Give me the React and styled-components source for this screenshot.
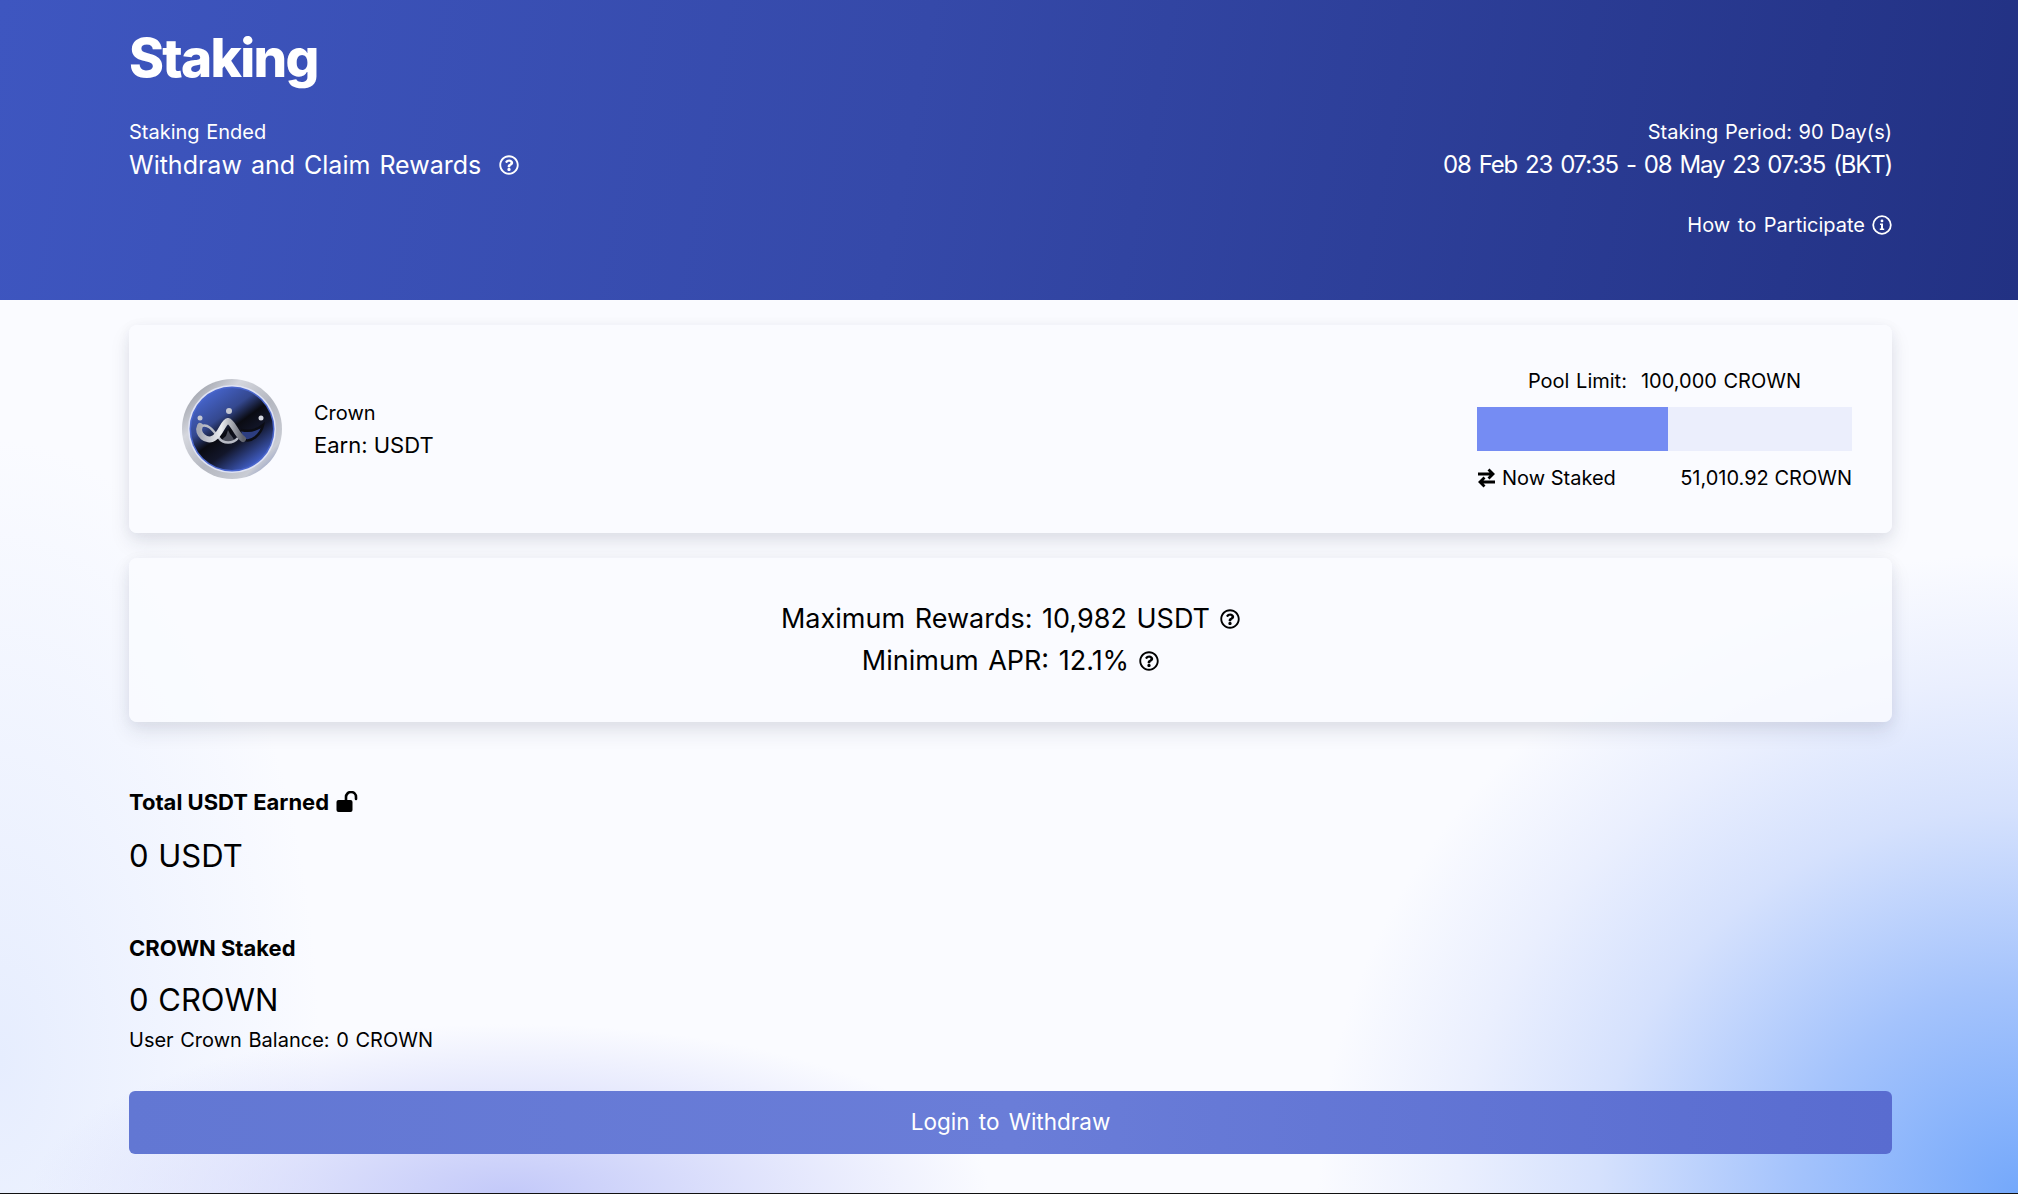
import React from "react";
import styled, { createGlobalStyle } from "styled-components";
import { FaRegQuestionCircle } from "react-icons/fa";

const GlobalStyle = createGlobalStyle`
  html, body {
    margin: 0;
    padding: 0;
    background: #fff;
  }
  body {
    font-family: Inter, "Open Sans", sans-serif;
    color: #000;
  }
`;

const Page = styled.div`
  width: 2018px;
  height: 1194px;
  overflow: hidden;
  box-sizing: border-box;
  border-bottom: 1px solid #111;
  background:
    radial-gradient(ellipse 480px 170px at 510px 1194px, #c3c9f9 0%, rgba(205, 210, 250, 0.6) 50%, rgba(220, 224, 250, 0) 100%),
    radial-gradient(ellipse 700px 640px at 2018px 1194px, #74a8fb 0%, #a4c3fc 32%, #d5e1fd 60%, #eaeffe 80%, rgba(248, 250, 255, 0) 100%),
    radial-gradient(ellipse 320px 620px at 0 1060px, #e6edfe 0%, rgba(240, 244, 254, 0) 100%),
    #fafbff;
`;

const Hero = styled.header`
  height: 300px;
  box-sizing: border-box;
  padding: 25px 126px 0 129px;
  color: #fff;
  background: linear-gradient(100deg, #3e56c0 0%, #3549a9 45%, #223183 100%);
`;

const Title = styled.h1`
  margin: 0 0 27px;
  font-size: 53px;
  line-height: 66px;
  font-weight: 800;
  letter-spacing: -1.7px;
`;

const HeroRow = styled.div`
  display: flex;
  justify-content: space-between;
`;

const HeroCol = styled.div`
  text-align: ${p => (p.$right ? "right" : "left")};
`;

const SmallLine = styled.div`
  font-size: 20px;
  line-height: 28px;
  word-spacing: 1px;
`;

const BigLine = styled.div`
  display: flex;
  align-items: center;
  gap: 18px;
  margin-top: 1px;
  font-size: 25px;
  line-height: 36px;
  word-spacing: 2px;
`;

const DateLine = styled(BigLine)`
  justify-content: flex-end;
  font-size: 24px;
  letter-spacing: -1.2px;
  word-spacing: 2.5px;
`;

const HowTo = styled.div`
  display: flex;
  align-items: center;
  justify-content: flex-end;
  gap: 7px;
  margin-top: 28px;
  font-size: 20px;
  line-height: 28px;
  word-spacing: 2px;
`;

const Content = styled.main`
  padding: 25px 126px 0 129px;
`;

const Card = styled.section`
  box-sizing: border-box;
  height: ${p => p.$h}px;
  margin-bottom: 25px;
  background: rgba(250, 251, 255, 0.78);
  border-radius: 8px;
  box-shadow: 0 10px 20px rgba(30, 40, 70, 0.1), 0 2px 14px rgba(30, 40, 70, 0.05);
`;

const PoolCard = styled(Card)`
  display: flex;
  align-items: center;
  justify-content: space-between;
  padding: 0 40px 0 52px;
`;

const TokenInfo = styled.div`
  display: flex;
  align-items: center;
  gap: 31px;
`;

const TokenText = styled.div`
  margin-top: 1px;
`;

const TokenName = styled.div`
  font-size: 20px;
  line-height: 30px;
`;

const TokenEarn = styled.div`
  font-size: 22px;
  line-height: 34px;
`;

const PoolStats = styled.div`
  width: 375px;
`;

const PoolLimit = styled.div`
  display: flex;
  justify-content: center;
  gap: 14px;
  font-size: 20px;
  line-height: 30px;
  margin-bottom: 11px;
  word-spacing: 1px;
`;

const Track = styled.div`
  height: 44px;
  background: #ebeefc;
`;

const Fill = styled.div`
  height: 100%;
  background: #758cf3;
`;

const StakedRow = styled.div`
  display: flex;
  justify-content: space-between;
  margin-top: 13px;
  font-size: 20px;
  line-height: 28px;
`;

const StakedLabel = styled.div`
  display: flex;
  align-items: center;
  gap: 6px;
`;

const RewardsCard = styled(Card)`
  display: flex;
  flex-direction: column;
  justify-content: center;
  align-items: center;
  margin-bottom: 0;
`;

const RewardLine = styled.div`
  display: flex;
  align-items: center;
  gap: 10px;
  font-size: 27px;
  line-height: 42px;
  word-spacing: 2px;
`;

const Stat = styled.div`
  margin-top: ${p => p.$top}px;
`;

const StatLabel = styled.div`
  display: flex;
  align-items: center;
  gap: 7px;
  font-size: 22px;
  line-height: 30px;
  font-weight: 700;
`;

const StatValue = styled.div`
  margin-top: ${p => p.$gap}px;
  font-size: 31px;
  line-height: 42px;
  word-spacing: 1px;
`;

const Balance = styled.div`
  margin-top: 5px;
  font-size: 20px;
  line-height: 28px;
  word-spacing: 1px;
`;

const LoginButton = styled.button`
  display: block;
  width: 100%;
  height: 63px;
  margin-top: 37px;
  padding: 0 0 2px;
  border: 0;
  border-radius: 6px;
  color: #fff;
  font: inherit;
  font-size: 22.5px;
  word-spacing: 3px;
  background: linear-gradient(90deg, #6277d3 0%, #6a7dd8 50%, #596cd0 100%);
`;

const InfoIcon = () => (
  <svg width="20" height="20" viewBox="0 0 20 20" fill="none">
    <circle cx="10" cy="10" r="8.8" stroke="#fff" strokeWidth="1.8" />
    <circle cx="10" cy="5.9" r="1.4" fill="#fff" />
    <path d="M8 8.6h3v5h1.2v1.4H7.8v-1.4H9V10H8z" fill="#fff" />
  </svg>
);

const ExchangeIcon = () => (
  <svg width="19" height="20" viewBox="0 0 19 20" fill="none">
    <path d="M1 6h15M11.500 1.500l4.500 4.500-4.500 4.500M18 14H3M7.500 9.500L3 14l4.500 4.500" stroke="#000" strokeWidth="2.800" />
  </svg>
);

const UnlockIcon = () => (
  <svg width="23" height="22" viewBox="0 0 23 22">
    <rect x="0.500" y="9" width="16" height="12" rx="2" fill="#000" />
    <path d="M10 9.500V6a5 5 0 0 1 10 0v2" fill="none" stroke="#000" strokeWidth="2.600" strokeLinecap="round" />
  </svg>
);

const CrownLogo = () => (
  <svg width="102" height="102" viewBox="0 0 102 102">
    <defs>
      <linearGradient id="ring" x1="0" y1="0" x2="1" y2="1">
        <stop offset="0" stopColor="#80848f" />
        <stop offset="0.3" stopColor="#d5d7de" />
        <stop offset="0.55" stopColor="#b4b7c0" />
        <stop offset="0.8" stopColor="#c9ccd4" />
        <stop offset="1" stopColor="#5f73b8" />
      </linearGradient>
      <linearGradient id="disc" x1="0.15" y1="0.08" x2="0.78" y2="0.95">
        <stop offset="0" stopColor="#4766cf" />
        <stop offset="0.32" stopColor="#34488f" />
        <stop offset="0.5" stopColor="#0a0b12" />
        <stop offset="0.68" stopColor="#12162a" />
        <stop offset="1" stopColor="#4362cf" />
      </linearGradient>
      <linearGradient id="ribbon" x1="0" y1="0" x2="1" y2="0">
        <stop offset="0" stopColor="#a6a9b4" />
        <stop offset="0.5" stopColor="#eceef2" />
        <stop offset="1" stopColor="#60636e" />
      </linearGradient>
    </defs>
    <circle cx="51" cy="51" r="50" fill="url(#ring)" />
    <circle cx="51" cy="51" r="44" fill="#dfe3f5" />
    <circle cx="51" cy="51" r="42.500" fill="#4a66cc" />
    <circle cx="51" cy="51" r="41" fill="url(#disc)" />
    <path d="M45 58C40 62 38 65 47 65C56 65 54 62 49 56L47 52z" fill="#4c4f5c" />
    <path d="M19 49C26 44 32 52 38 60C42 66 52 66 57 60" fill="none" stroke="#b9bcc6" strokeWidth="2.500" />
    <path d="M62 61C70 66 80 56 82 47C76 52 68 54 60 52" fill="#2c3d80" stroke="#0c0d14" strokeWidth="2.500" />
    <path d="M19 48C15 56 26 65 33 60C40 56 42 44 47 43C52 44 55 56 62 61" fill="none" stroke="url(#ribbon)" strokeWidth="6" strokeLinecap="round" />
    <circle cx="48" cy="33" r="3" fill="#c4c7d2" />
    <circle cx="19" cy="40" r="2.500" fill="#c4c7d2" />
    <circle cx="80" cy="40" r="2.500" fill="#d4d6de" />
  </svg>
);

const App = () => {
  return (
    <Page>
      <GlobalStyle />
      <Hero>
        <Title>Staking</Title>
        <HeroRow>
          <HeroCol>
            <SmallLine>Staking Ended</SmallLine>
            <BigLine>
              Withdraw and Claim Rewards <FaRegQuestionCircle size={20} />
            </BigLine>
          </HeroCol>
          <HeroCol $right>
            <SmallLine>Staking Period: 90 Day(s)</SmallLine>
            <DateLine>08 Feb 23 07:35 - 08 May 23 07:35 (BKT)</DateLine>
            <HowTo>
              How to Participate <InfoIcon />
            </HowTo>
          </HeroCol>
        </HeroRow>
      </Hero>
      <Content>
        <PoolCard $h={208}>
          <TokenInfo>
            <CrownLogo />
            <TokenText>
              <TokenName>Crown</TokenName>
              <TokenEarn>Earn: USDT</TokenEarn>
            </TokenText>
          </TokenInfo>
          <PoolStats>
            <PoolLimit>
              <span>Pool Limit:</span>
              <span>100,000 CROWN</span>
            </PoolLimit>
            <Track>
              <Fill style={{ width: "51.01%" }} />
            </Track>
            <StakedRow>
              <StakedLabel>
                <ExchangeIcon /> Now Staked
              </StakedLabel>
              <span>51,010.92 CROWN</span>
            </StakedRow>
          </PoolStats>
        </PoolCard>
        <RewardsCard $h={164}>
          <RewardLine>
            Maximum Rewards: 10,982 USDT <FaRegQuestionCircle size={20} />
          </RewardLine>
          <RewardLine>
            Minimum APR: 12.1% <FaRegQuestionCircle size={20} />
          </RewardLine>
        </RewardsCard>
        <Stat $top={65}>
          <StatLabel>
            Total USDT Earned <UnlockIcon />
          </StatLabel>
          <StatValue $gap={18}>0 USDT</StatValue>
        </Stat>
        <Stat $top={56}>
          <StatLabel>CROWN Staked</StatLabel>
          <StatValue $gap={16}>0 CROWN</StatValue>
          <Balance>User Crown Balance: 0 CROWN</Balance>
        </Stat>
        <LoginButton>Login to Withdraw</LoginButton>
      </Content>
    </Page>
  );
};

export default App;
